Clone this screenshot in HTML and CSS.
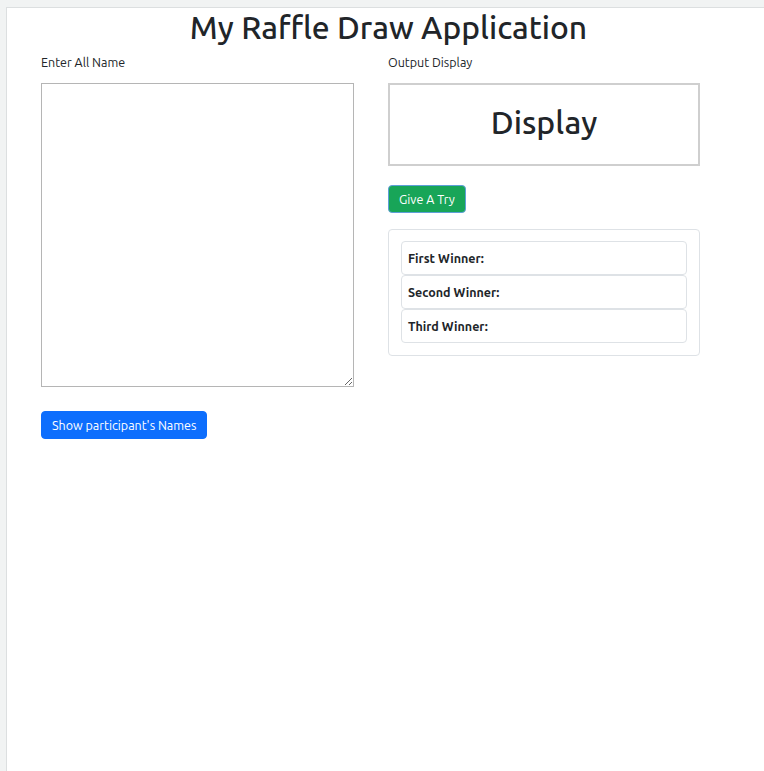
FILE: index.html
```html
<!DOCTYPE html>
<html lang="en">
<head>
<meta charset="utf-8">
<title>My Raffle Draw Application</title>
<link rel="stylesheet" href="styles.css">
</head>
<body>
<div class="frame">
  <h1 class="title">My Raffle Draw Application</h1>
  <div class="row">
    <div class="col">
      <label class="label" for="names">Enter All Name</label>
      <textarea id="names" class="names"></textarea>
      <button class="btn btn-blue">Show participant's Names</button>
    </div>
    <div class="col">
      <div class="label">Output Display</div>
      <div class="display">Display</div>
      <button class="btn btn-green">Give A Try</button>
      <div class="card">
        <ul class="winners">
          <li class="winner">First Winner:</li>
          <li class="winner">Second Winner:</li>
          <li class="winner">Third Winner:</li>
        </ul>
      </div>
    </div>
  </div>
</div>
</body>
</html>
```

FILE: styles.css
```css
html, body {
  margin: 0;
  height: 100%;
}
body {
  background: #f1f3f3;
  font-family: "Ubuntu", "Noto Sans", "Open Sans", sans-serif;
  color: #212529;
  padding: 7px 0 0 6px;
  box-sizing: border-box;
}
.frame {
  background: #fff;
  border-top: 1px solid #dcdfe0;
  border-left: 1px solid #dcdfe0;
  min-height: 100%;
  box-sizing: border-box;
}
.title {
  margin: 0;
  padding: 1px 0 0 6px;
  text-align: center;
  font-size: 31.8px;
  font-weight: 500;
  line-height: 36px;
}
.row {
  display: flex;
  gap: 34px;
  padding-left: 34px;
  margin-top: 8px;
}
.col {
  display: flex;
  flex-direction: column;
  align-items: flex-start;
}
.col:first-child { width: 313px; }
.col:last-child { width: 312px; }
.label {
  font-size: 12.5px;
  line-height: 18px;
  margin-bottom: 12px;
}
.names {
  width: 313px;
  height: 304px;
  box-sizing: border-box;
  border: 1px solid #b5b5b5;
  margin: 0;
  padding: 2px;
}
.btn {
  font-family: inherit;
  font-size: 12.5px;
  color: #fff;
  border-radius: 4px;
  height: 28px;
  padding: 0 10px;
  cursor: pointer;
}
.btn-blue {
  margin-top: 24px;
  background: #0d6efd;
  border: 1px solid #0d6efd;
}
.btn-green {
  margin-top: 19px;
  background: #18a558;
  border: 1px solid #5e9fd8;
}
.display {
  width: 312px;
  height: 83px;
  box-sizing: border-box;
  border: 2px solid #cfcfcf;
  padding-bottom: 6px;
  display: flex;
  align-items: center;
  justify-content: center;
  font-size: 32px;
  font-weight: 500;
}
.card {
  margin-top: 16px;
  width: 312px;
  box-sizing: border-box;
  border: 1px solid #dee2e6;
  border-radius: 4px;
  padding: 11px 12px 12px;
}
.winners {
  list-style: none;
  margin: 0;
  padding: 0;
}
.winner {
  border: 1px solid #dee2e6;
  border-radius: 4px;
  height: 34px;
  box-sizing: border-box;
  padding: 0 6px;
  display: flex;
  align-items: center;
  font-size: 12.5px;
  font-weight: 700;
}
```
